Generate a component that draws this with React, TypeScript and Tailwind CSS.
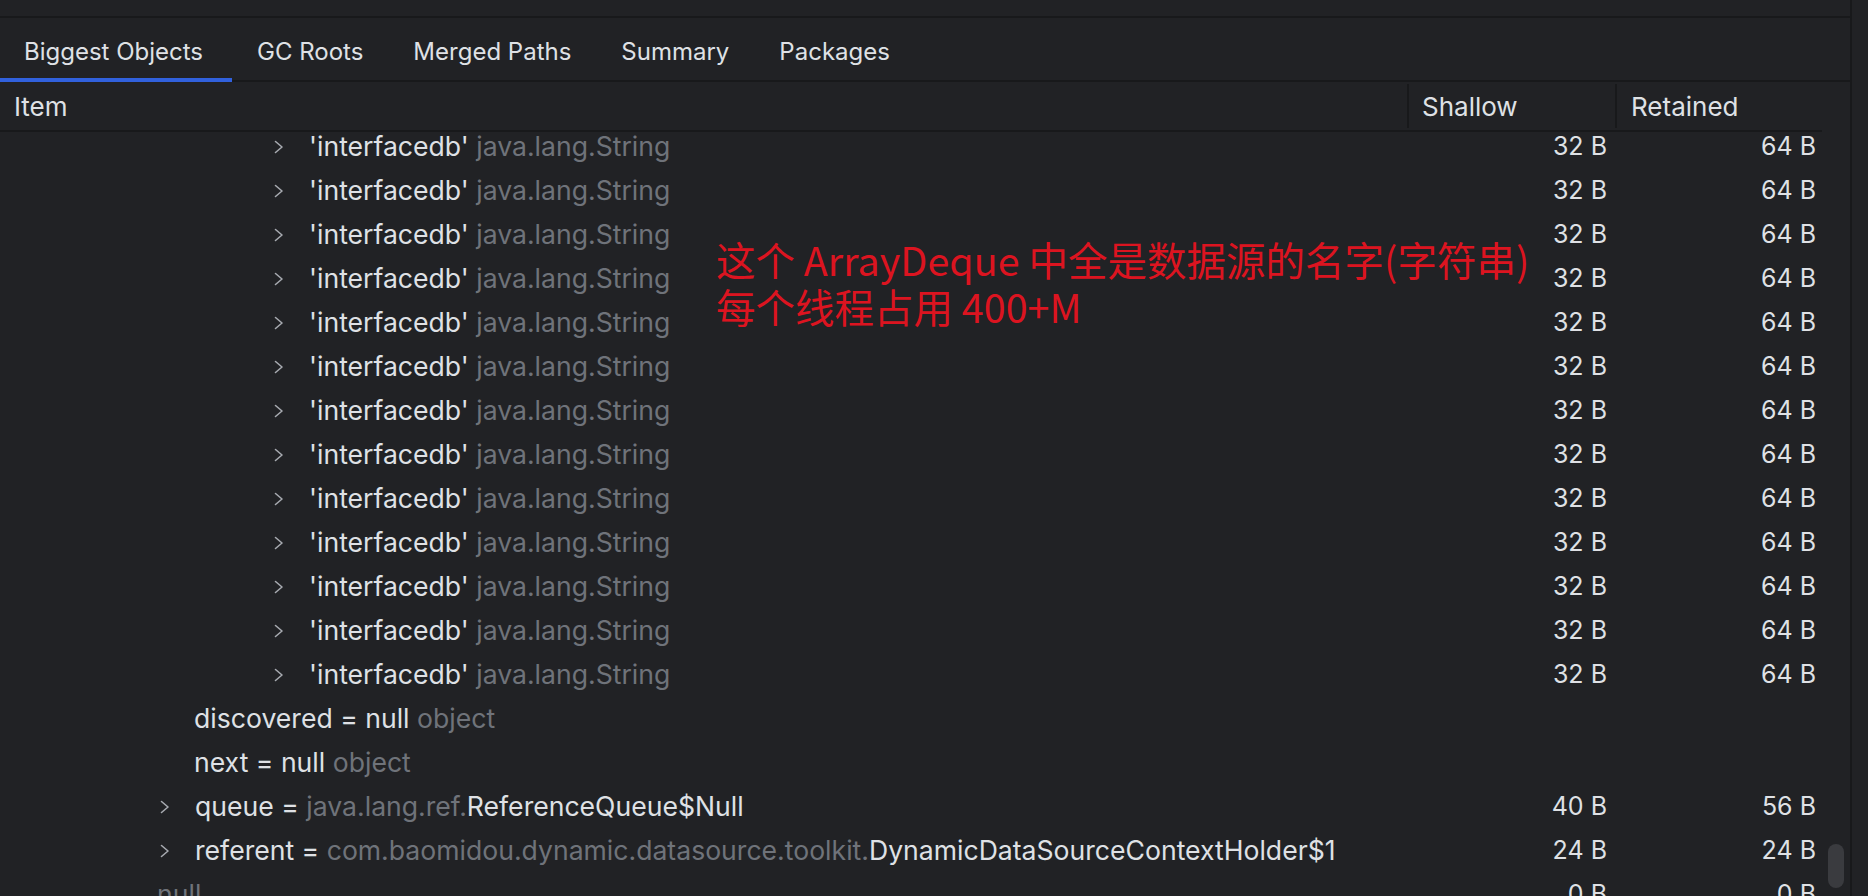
import React from "react";

const FONT = { fontFamily: "Inter, 'Noto Sans', sans-serif" };

function Chevron() {
  return (
    <svg width="10" height="16" viewBox="0 0 10 16" className="shrink-0">
      <polyline points="1.5,2.5 8,8 1.5,13.5" fill="none" stroke="#a7aab0" strokeWidth="1.6" strokeLinecap="round" strokeLinejoin="round" />
    </svg>
  );
}

type Seg = { t: string; g?: boolean };

function Row({ indent, chevron, segs, shallow, retained }: { indent: number; chevron: boolean; segs: Seg[]; shallow?: string; retained?: string }) {
  return (
    <div className="flex h-[44px] items-center text-[#dfe1e5] whitespace-nowrap">
      <div className="flex w-[1407px] items-center text-[26.6px]" style={{ paddingLeft: indent }}>
        {chevron ? (
          <div className="flex w-[35px] shrink-0 items-center">
            <Chevron />
          </div>
        ) : null}
        <span>
          {segs.map((s, i) => (
            <span key={i} className={s.g ? "text-[#6f737a]" : "text-[#dfe1e5]"}>
              {s.t}
            </span>
          ))}
        </span>
      </div>
      <div className="w-[208px] pr-[8px] text-right text-[25px]">{shallow}</div>
      <div className="flex-1 pr-[6px] text-right text-[25px]">{retained}</div>
    </div>
  );
}

export default function App() {
  const strRows = Array.from({ length: 13 });
  return (
    <div className="flex h-[896px] w-[1868px] overflow-hidden bg-[#212225]" style={FONT}>
      <div className="flex w-[1850px] flex-col">
        <div className="h-[16px]" />
        <div className="h-[2px] bg-[#18191b]" />
        {/* tabs */}
        <div className="flex h-[60px] items-center pt-[8px] text-[24px] text-[#dfe1e5]">
          <div className="flex w-[232px] justify-center pr-[5px]">Biggest Objects</div>
          <div className="px-[25px]">GC Roots</div>
          <div className="px-[25px]">Merged Paths</div>
          <div className="px-[25px]">Summary</div>
          <div className="px-[25px]">Packages</div>
        </div>
        <div className="flex h-[4px]">
          <div className="w-[232px] bg-[#3161dd]" />
          <div className="flex flex-1 flex-col">
            <div className="h-[2px]" />
            <div className="h-[2px] bg-[#18191b]" />
          </div>
        </div>
        {/* table */}
        <div className="flex flex-1 min-h-0">
          <div className="flex w-[1822px] flex-col">
            <div className="flex h-[48px] items-stretch text-[26px] text-[#dfe1e5]">
              <div className="flex w-[1407px] items-center pl-[14px]">Item</div>
              <div className="my-[2px] w-[2px] bg-[#18191b]" />
              <div className="flex w-[206px] items-center pl-[13px]">Shallow</div>
              <div className="my-[2px] w-[2px] bg-[#18191b]" />
              <div className="flex flex-1 items-center pl-[14px]">Retained</div>
            </div>
            <div className="h-[2px] bg-[#18191b]" />
            <div className="relative flex-1 min-h-0 overflow-hidden">
              <div className="-mt-[7px]">
                {strRows.map((_, i) => (
                  <Row
                    key={i}
                    indent={274}
                    chevron
                    segs={[{ t: "'interfacedb' " }, { t: "java.lang.String", g: true }]}
                    shallow="32 B"
                    retained="64 B"
                  />
                ))}
                <Row indent={194} chevron={false} segs={[{ t: "discovered = null " }, { t: "object", g: true }]} />
                <Row indent={194} chevron={false} segs={[{ t: "next = null " }, { t: "object", g: true }]} />
                <Row
                  indent={160}
                  chevron
                  segs={[{ t: "queue = " }, { t: "java.lang.ref.", g: true }, { t: "ReferenceQueue$Null" }]}
                  shallow="40 B"
                  retained="56 B"
                />
                <Row
                  indent={160}
                  chevron
                  segs={[
                    { t: "referent = " },
                    { t: "com.baomidou.dynamic.datasource.toolkit.", g: true },
                    { t: "DynamicDataSourceContextHolder$1" },
                  ]}
                  shallow="24 B"
                  retained="24 B"
                />
                <Row indent={157} chevron={false} segs={[{ t: "null", g: true }]} shallow="0 B" retained="0 B" />
              </div>
              <div
                className="absolute left-[716px] top-[103px] text-[39.5px] leading-[47px] text-[#dc1420] whitespace-nowrap"
                style={{ fontFamily: "'Noto Sans CJK SC', 'Noto Sans', sans-serif" }}
              >
                <div>这个 ArrayDeque 中全是数据源的名字(字符串)</div>
                <div>每个线程占用 400+M</div>
              </div>
            </div>
          </div>
          <div className="flex w-[28px] flex-col">
            <div className="ml-[6px] mt-[762px] h-[44px] w-[16px] rounded-full bg-[#3a3b3f]" />
          </div>
        </div>
      </div>
      <div className="w-[2px] bg-[#18191b]" />
      <div className="flex-1" />
    </div>
  );
}
